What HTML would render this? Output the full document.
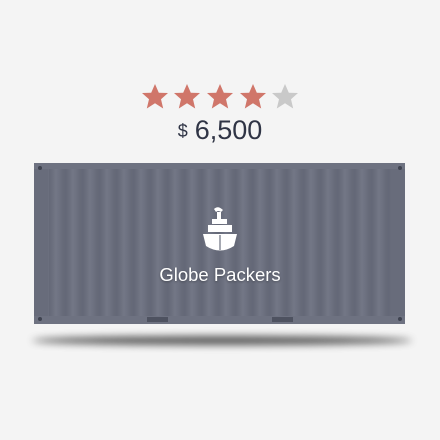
<!DOCTYPE html>
<html><head><style>
html,body{margin:0;padding:0;width:440px;height:440px;background:#f4f4f4;overflow:hidden;position:relative;font-family:"Liberation Sans",sans-serif}
.price{position:absolute;top:115px;left:0;width:440px;text-align:center;color:#2f3445}
.price .d{font-size:18px;vertical-align:2px;margin-right:7px}
.price .n{font-size:27px}
.shadow{position:absolute;left:32px;top:336px;width:380px;height:9px;background:#444;border-radius:50%;filter:blur(4px);opacity:.9}
.box{position:absolute;left:34px;top:163px;width:371px;height:161px;background:#6b6f7e}
.inner{position:absolute;left:15px;top:5px;right:14px;bottom:8px;background:repeating-linear-gradient(90deg,#646877 0,#6a6e7d 3px,#737786 7px,#6c707f 11px,#666a79 14px,#646877 17px)}
.post{position:absolute;top:0;bottom:0;width:14px;background:#686c7b}
.bar{position:absolute;left:0;right:0;height:6px;background:#6e7281}
.pocket{position:absolute;bottom:2px;width:21px;height:5px;background:#4e5260}
.dot{position:absolute;width:4px;height:4px;border-radius:50%;background:#3f4350}
.logo{position:absolute;left:0;width:440px;text-align:center;top:264px;color:#fff;font-size:18.5px;text-shadow:0 1px 2px rgba(0,0,0,.3)}
</style></head><body>
<svg style="position:absolute;left:0;top:80px" width="440" height="34" viewBox="0 0 440 34">
<defs><path id="s" d="M0 -13 L3.8 -4.3 L13 -4 L6 2.2 L8.2 11.5 L0 6.3 L-8.2 11.5 L-6 2.2 L-13 -4 L-3.8 -4.3 Z"/></defs>
<use href="#s" x="155" y="17" fill="#d0766a"/>
<use href="#s" x="187" y="17" fill="#d0766a"/>
<use href="#s" x="220" y="17" fill="#d0766a"/>
<use href="#s" x="253" y="17" fill="#d0766a"/>
<use href="#s" x="285" y="17" fill="#c9c9c9"/>
</svg>
<div class="price"><span class="d">$</span><span class="n">6,500</span></div>
<div class="shadow"></div>
<div class="box">
<div class="inner"></div>
<div class="post" style="left:0"></div>
<div class="post" style="right:0"></div>
<div class="bar" style="top:0"></div>
<div class="bar" style="bottom:0;height:8px"></div>
<div class="pocket" style="left:113px"></div>
<div class="pocket" style="left:238px"></div>
<div class="dot" style="left:4px;top:3px"></div>
<div class="dot" style="left:4px;bottom:3px"></div>
<div class="dot" style="right:3px;top:3px"></div>
<div class="dot" style="right:3px;bottom:3px"></div>
</div>
<svg style="position:absolute;left:202px;top:206px" width="36" height="48" viewBox="0 0 36 48">
<g fill="#fff">
<path d="M12 3 q4-4 9 1 l-2 2 q-3-2-5 0 z"/>
<rect x="15" y="6" width="4" height="7"/>
<rect x="10" y="13" width="15" height="5"/>
<path d="M6 19 h24 v7 h-24z"/>
<path d="M1 28 h34 l-3 12 q-14 9-28 0 z"/>
</g>
<path d="M18 29 v15" stroke="#6b6f7e" stroke-width="1.2"/>
</svg>
<div class="logo">Globe Packers</div>
</body></html>
